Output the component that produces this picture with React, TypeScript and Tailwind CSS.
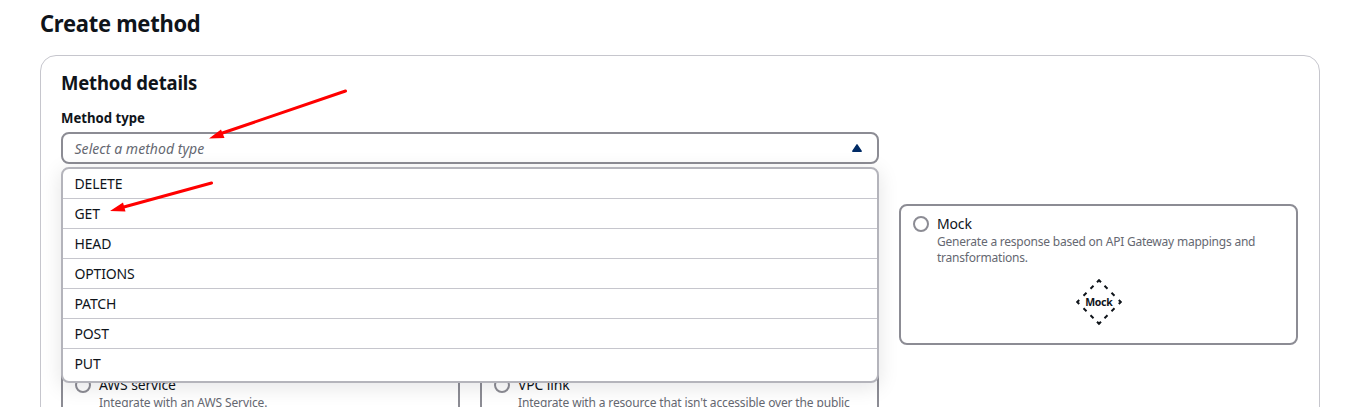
import type { ReactNode } from "react";

const methods = ["DELETE", "GET", "HEAD", "OPTIONS", "PATCH", "POST", "PUT"];

interface CardProps {
  title?: string;
  spacing?: string;
  children?: ReactNode;
  icon?: ReactNode;
}

function Card({ title, spacing = "", children, icon }: CardProps) {
  return (
    <div className="flex h-[141px] flex-col rounded-lg border-2 border-[#8c8c94] px-3 pt-2">
      {title && (
        <div className="flex gap-2">
          <span className="mt-[2px] size-4 shrink-0 rounded-full border-2 border-[#8c8c94] bg-white" />
          <div className="min-w-0">
            <div className="text-[14px] leading-5 tracking-[-0.15px] text-[#0f141a]">{title}</div>
            <div className={`text-[12px] leading-4 text-[#656871] ${spacing}`}>{children}</div>
          </div>
        </div>
      )}
      {icon && <div className="mt-3 flex justify-center">{icon}</div>}
    </div>
  );
}

function MockIcon() {
  return (
    <svg width="48" height="48" viewBox="0 0 48 48" fill="none">
      <g stroke="#0f141a" strokeWidth="2">
        <path d="M22 4.2 24 2.2 26 4.2M43.8 22 45.8 24 43.8 26M22 43.8 24 45.8 26 43.8M4.2 22 2.2 24 4.2 26" />
        <path d="M29.5 7.7l3 3M36.5 14.7l3 3M18.5 7.7l-3 3M11.5 14.7l-3 3M29.5 40.3l3-3M36.5 33.3l3-3M18.5 40.3l-3-3M11.5 33.3l-3-3" />
      </g>
      <text x="24" y="28" textAnchor="middle" fontSize="10.5" fontWeight="700" fill="#0f141a" textLength="27.5">
        Mock
      </text>
    </svg>
  );
}

export default function App() {
  return (
    <div className="relative h-[407px] overflow-hidden bg-white pt-2 pr-12 pl-10 font-['Noto_Sans','Open_Sans',sans-serif] text-[#0f141a]">
      <h1 className="origin-left scale-x-[0.915] text-[24px] leading-[30px] font-bold tracking-[-0.3px]">
        Create method
      </h1>
      <main className="mt-[17px] h-[600px] rounded-2xl border border-[#c6c6cd] px-5 pt-[15px]">
        <h2 className="origin-left scale-x-[0.925] text-[20px] leading-6 font-bold tracking-[-0.2px]">
          Method details
        </h2>
        <div className="mt-[13px] origin-left scale-x-[0.94] text-[14px] leading-5 font-bold">Method type</div>
        <div className="relative mt-1 w-[818px]">
          <div className="flex h-8 items-center justify-between rounded-lg border-2 border-[#8c8c94] pr-[15px] pl-[11.5px]">
            <span className="text-[14px] tracking-[0.05px] text-[#656871] italic">Select a method type</span>
            <svg width="10" height="8" viewBox="0 0 10 8">
              <path d="M5 .8 9.2 7.2H.8Z" fill="#002b66" stroke="#002b66" strokeWidth="1.4" strokeLinejoin="round" />
            </svg>
          </div>
          <ul className="absolute top-[35px] left-0 z-10 h-[216px] w-[818px] rounded-lg border-2 border-[#b4b4bb] bg-white shadow-[0_4px_20px_1px_rgba(0,7,22,0.10)]">
            {methods.map((method) => (
              <li
                key={method}
                className="h-[30px] border-b border-[#c6c6cd] pl-[11.5px] text-[14px] leading-[30px] tracking-[-0.15px] last:border-0"
              >
                {method}
              </li>
            ))}
          </ul>
        </div>
        <div className="mt-10 grid w-[1237px] grid-cols-3 gap-5">
          <Card />
          <Card />
          <Card title="Mock" spacing="tracking-[-0.22px]" icon={<MockIcon />}>
            Generate a response based on API Gateway mappings and transformations.
          </Card>
          <Card title="AWS service" spacing="tracking-[-0.11px]">
            Integrate with an AWS Service.
          </Card>
          <Card title="VPC link" spacing="tracking-[-0.15px]">
            Integrate with a resource that isn't accessible over the public internet.
          </Card>
        </div>
      </main>
      <svg className="pointer-events-none absolute inset-0 z-20" width="1368" height="407" fill="none">
        <path d="M345.5 91 221 133.5M211.5 183 122 207.5" stroke="#ff0000" strokeWidth="3" strokeLinecap="round" />
        <path d="M209 138.5 221 129.5 224.5 138ZM110 211 123 202.5 125.5 211.5Z" fill="#ff0000" />
      </svg>
    </div>
  );
}
